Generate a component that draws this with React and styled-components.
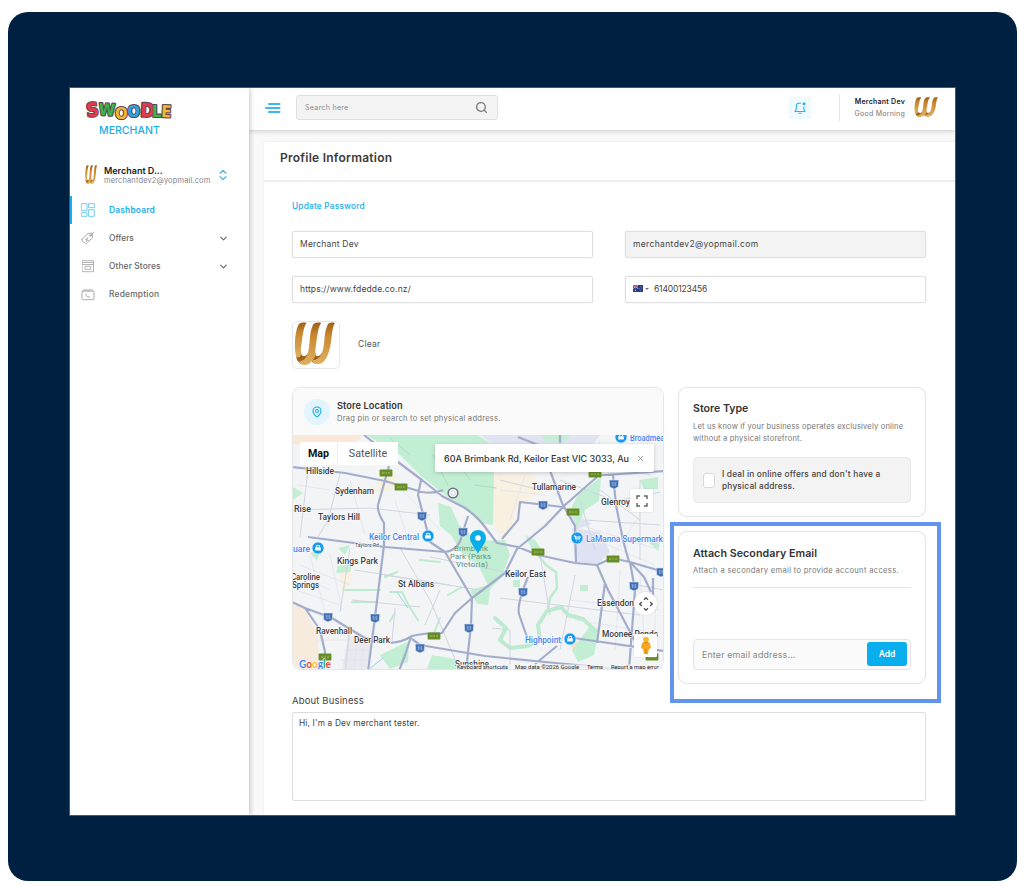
import React from "react";
import styled, { createGlobalStyle, css } from "styled-components";
import { ChevronDown, ChevronsUpDown, Search, MapPin, X } from "lucide-react";

const Global = createGlobalStyle`
  * { box-sizing: border-box; }
  body { margin: 0; background: #fff; font-family: Inter, "Liberation Sans", sans-serif; color: #444; }
  h1, h2, p { margin: 0; }
  svg { display: block; flex: none; }
`;

const fit = css`
  white-space: nowrap;
  letter-spacing: ${(p) => p.$ls || 0}px;
`;

const Page = styled.div`
  height: 886px;
  padding: 12px 7px 5px 8px;
`;
const Frame = styled.div`
  height: 869px;
  padding: 76px 62px 66px;
  background: #002042;
  border-radius: 20px;
`;
const Window = styled.div`
  display: flex;
  height: 727px;
  background: #f9f9f9;
  overflow: hidden;
  box-shadow: 0 0 0 1px #40587a;
`;

/* Sidebar */
const Sidebar = styled.aside`
  width: 179px;
  flex: none;
  background: #fff;
  box-shadow: 1px 0 5px rgba(0, 0, 0, 0.24);
  z-index: 2;
`;
const Brand = styled.div`
  padding: 9px 0 0 15px;
  height: 74px;
`;
const BrandSub = styled.div`
  ${fit}
  margin: 1px 0 0 14px;
  font-size: 10.5px;
  line-height: 13px;
  font-weight: 500;
  color: #18aeea;
`;
const Account = styled.div`
  display: flex;
  align-items: center;
  height: 25px;
  padding-left: 15px;
`;
const AccountText = styled.div`
  width: 107px;
  margin: 0 5px 0 7px;
`;
const AccountName = styled.div`
  ${fit}
  font-size: 9px;
  line-height: 11px;
  font-weight: 600;
  color: #222;
`;
const AccountMail = styled.div`
  ${fit}
  font-size: 7.5px;
  line-height: 9px;
  color: #85858f;
`;
const Nav = styled.nav`
  margin-top: 9px;
`;
const NavItem = styled.div`
  display: flex;
  align-items: center;
  height: 28px;
  padding: 0 20px 0 9px;
  border-left: 2px solid ${(p) => (p.$active ? "#18aeea" : "transparent")};
  color: ${(p) => (p.$active ? "#18aeea" : "#666")};
`;
const NavLabel = styled.span`
  ${fit}
  flex: 1;
  margin-left: 14px;
  font-size: 8.4px;
  font-weight: ${(p) => (p.$active ? 600 : 500)};
`;

/* Top bar */
const Main = styled.main`
  flex: 1;
  min-width: 0;
  display: flex;
  flex-direction: column;
`;
const TopBar = styled.header`
  display: flex;
  align-items: center;
  height: 42px;
  flex: none;
  padding: 0 17px 3px 15px;
  background: #fff;
  box-shadow: 0 1px 5px rgba(0, 0, 0, 0.2);
  z-index: 1;
`;
const SearchBox = styled.div`
  display: flex;
  align-items: center;
  justify-content: space-between;
  width: 202px;
  height: 25px;
  margin-left: 15px;
  padding: 0 9px 0 8px;
  border: 1px solid #e0e0e0;
  border-radius: 3px;
  background: #f3f3f3;
  color: #777;
`;
const SearchHint = styled.span`
  ${fit}
  font-size: 7.2px;
  color: #8b8b96;
`;
const Bell = styled.div`
  display: grid;
  place-items: center;
  width: 22px;
  height: 22px;
  margin-left: auto;
  background: #effaff;
  border-radius: 2px;
`;
const Separator = styled.div`
  width: 1px;
  height: 27px;
  margin: 0 13px 0 28px;
  background: #e4e4e4;
`;
const Greeting = styled.div`
  display: flex;
  flex-direction: column;
  align-items: flex-end;
  width: 52px;
  margin-right: 9px;
`;
const GreetName = styled.div`
  ${fit}
  font-size: 7px;
  line-height: 12px;
  font-weight: 600;
  color: #222;
`;
const GreetLine = styled.div`
  ${fit}
  font-size: 7px;
  line-height: 12px;
  color: #777;
`;

/* Profile panel */
const Panel = styled.section`
  flex: 1;
  margin: 12px 0 0 15px;
  background: #fff;
  box-shadow: 0 0 3px rgba(0, 0, 0, 0.06);
`;
const PanelHead = styled.div`
  height: 40px;
  padding: 7px 0 0 16px;
  border-bottom: 2px solid #efefef;
`;
const PanelTitle = styled.h1`
  ${fit}
  font-size: 12px;
  line-height: 18px;
  font-weight: 600;
  color: #3b3b3b;
`;
const Form = styled.div`
  padding: 16px 29px 0 28px;
`;
const PasswordLink = styled.div`
  ${fit}
  height: 33px;
  font-size: 8.3px;
  line-height: 16px;
  font-weight: 500;
  color: #18aeea;
`;
const Fields = styled.div`
  display: grid;
  grid-template-columns: 1fr 1fr;
  gap: 18px 32px;
`;
const Field = styled.div`
  ${fit}
  display: flex;
  align-items: center;
  height: 27px;
  padding: 0 7px 2px;
  border: 1px solid #e0e0e0;
  border-radius: 2px;
  box-shadow: 0 0 2px rgba(0, 0, 0, 0.08);
  background: ${(p) => (p.$disabled ? "#f3f3f3" : "#fff")};
  font-size: 8.5px;
  color: #444;
`;
const FlagCaret = styled.span`
  margin: 1px 5px 0 2px;
  border: 2px solid transparent;
  border-top: 2.5px solid #777;
  border-bottom: 0;
`;
const LogoRow = styled.div`
  display: flex;
  align-items: center;
  gap: 18px;
  margin: 18px 0;
`;
const LogoBox = styled.div`
  width: 48px;
  height: 48px;
  padding: 0 0 0 1px;
  border: 1px solid #e8e8e8;
  border-radius: 5px;
`;
const ClearText = styled.span`
  ${fit}
  padding-bottom: 2px;
  font-size: 8.6px;
  color: #555;
`;
const Columns = styled.div`
  display: grid;
  grid-template-columns: 372px 248px;
  gap: 14px;
  align-items: start;
`;
const Card = styled.section`
  border: 1px solid #e6e6e6;
  border-radius: 9px;
  background: #fff;
  box-shadow: 0 0 2px rgba(0, 0, 0, 0.07);
`;
const LocationCard = styled(Card)`
  height: 283px;
  overflow: hidden;
`;
const LocationHead = styled.div`
  display: flex;
  align-items: center;
  gap: 7px;
  height: 47px;
  padding-left: 11px;
  background: #fafafa;
`;
const PinDisc = styled.div`
  display: grid;
  place-items: center;
  width: 26px;
  height: 26px;
  border-radius: 50%;
  background: #e2f4fd;
  color: #18aeea;
`;
const CardTitle = styled.h2`
  ${fit}
  font-size: ${(p) => p.$size}px;
  line-height: 14px;
  font-weight: 600;
  color: #333;
`;
const CardText = styled.p`
  ${fit}
  margin-top: ${(p) => p.$top || 0}px;
  font-size: 7.6px;
  line-height: 11.5px;
  color: #777;
`;
const MapArea = styled.div`
  position: relative;
  height: 235px;
`;
const MapTabs = styled.div`
  position: absolute;
  left: 7px;
  top: 7px;
  display: flex;
  height: 23px;
  background: #fff;
  font-family: Roboto, sans-serif;
  font-size: 10.7px;
  line-height: 24px;
`;
const MapTab = styled.div`
  ${fit}
  width: ${(p) => p.$w}px;
  text-align: center;
  color: ${(p) => (p.$on ? "#111" : "#555")};
  font-weight: ${(p) => (p.$on ? 700 : 400)};
  border-right: ${(p) => (p.$on ? "1px solid #eee" : "0")};
`;
const Address = styled.div`
  position: absolute;
  left: 142px;
  top: 9px;
  display: flex;
  align-items: center;
  justify-content: space-between;
  width: 219px;
  height: 28px;
  padding: 0 9px 0 9px;
  border-radius: 2px;
  background: #fff;
  box-shadow: 0 1px 4px rgba(0, 0, 0, 0.18);
  color: #777;
`;
const AddressText = styled.span`
  ${fit}
  font-size: 9px;
  font-weight: 500;
  color: #333;
`;
const MapButton = styled.div`
  position: absolute;
  left: ${(p) => p.$x}px;
  top: ${(p) => p.$y}px;
  display: grid;
  place-items: center;
  width: 23px;
  height: 23px;
  background: #fff;
  border-radius: ${(p) => (p.$round ? "50%" : "1px")};
  box-shadow: 0 0 2px rgba(0, 0, 0, 0.15);
`;
const Side = styled.div`
  display: grid;
  gap: 14px;
`;
const TypeCard = styled(Card)`
  height: 130px;
  padding: 14px 14px 0;
`;
const Option = styled.label`
  display: flex;
  align-items: center;
  gap: 7px;
  height: 46px;
  margin-top: 13px;
  padding-left: 9px;
  border: 1px solid #e9e9e9;
  border-radius: 4px;
  background: #f3f3f3;
`;
const Box = styled.span`
  width: 12px;
  height: 15px;
  border: 1px solid #d8d8d8;
  border-radius: 3px;
  background: #fff;
`;
const OptionText = styled.div`
  ${fit}
  font-size: 8.3px;
  line-height: 12.5px;
  font-weight: 500;
  color: #444;
`;
const EmailCard = styled(Card)`
  position: relative;
  height: 153px;
  padding: 15px 14px 0;
`;
const Highlight = styled.div`
  position: absolute;
  inset: -10px -16px -20px -9px;
  border: 4px solid #6495ed;
  pointer-events: none;
`;
const Rule = styled.div`
  height: 1px;
  margin: 10px 0 51px;
  background: #e4e4e4;
`;
const EmailInput = styled.div`
  display: flex;
  align-items: center;
  justify-content: space-between;
  height: 31px;
  padding: 0 3px 0 8px;
  border: 1px solid #e4e4e4;
  border-radius: 4px;
  background: #fafafa;
`;
const Placeholder = styled.span`
  ${fit}
  font-size: 8.8px;
  color: #888;
`;
const AddButton = styled.button`
  width: 40px;
  height: 24px;
  padding: 0;
  border: 0;
  border-radius: 3px;
  background: #08aeee;
  color: #fff;
  font: 600 8.5px Inter, sans-serif;
`;
const AboutLabel = styled.div`
  ${fit}
  margin: 9px 0 4px;
  font-size: 9.5px;
  line-height: 15px;
  color: #444;
`;
const About = styled.div`
  ${fit}
  height: 89px;
  padding: 5px 6px;
  border: 1px solid #dedede;
  border-radius: 2px;
  font-size: 8.3px;
  line-height: 11px;
  color: #444;
`;

function SwoodleLogo() {
  const letters = [
    ["S", 0, 19, "#e6394b", -6],
    ["W", 11.5, 17, "#3cb54a", 3],
    ["O", 28, 20.5, "#f4b731", 0],
    ["O", 40.5, 18.5, "#2fa5e0", 0],
    ["D", 53, 18.5, "#e6394b", 3],
    ["L", 65, 18.5, "#3cb54a", 0],
    ["E", 74, 19, "#f4b731", 3],
  ];
  return (
    <svg width="90" height="26" viewBox="-1 -1 90 26">
      <text fontFamily="DejaVu Sans Condensed, DejaVu Sans" fontWeight="700" fontSize="16.5" stroke="#5b4652" strokeWidth="2.2" strokeLinejoin="round" paintOrder="stroke">
        {letters.map(([c, x, y, fill, r], i) => (
          <tspan key={i} x={x + 1} y={y} fill={fill} rotate={r} fontSize={c === "S" || c === "D" ? 19 : undefined}>{c}</tspan>
        ))}
      </text>
    </svg>
  );
}

function GoldW({ width, height, id }) {
  return (
    <svg width={width} height={height} viewBox="0 0 42 46" preserveAspectRatio="none">
      <defs>
        <linearGradient id={id} x1="0" y1="0" x2="0" y2="1">
          <stop offset="0" stopColor="#9d5f14" />
          <stop offset="0.3" stopColor="#c98730" />
          <stop offset="1" stopColor="#e0b160" />
        </linearGradient>
      </defs>
      <path d="M7 32C9 37 13 35 15 31L16 38C13 46 3 45 2 34ZM21 32C23 37 27 35 29 31L28 39C25 45 18 43 16 36Z" fill="#9b6220" />
      <g fill={`url(#${id})`}>
        <path d="M4 4C5 .5 9 0 13 1C10 4 9 13 8 20C7 27 6.500 30 8 33C6 36 4 37 2.500 36C0 30 .5 12 4 4Z" />
        <path d="M19 4C20 .5 24 0 28 1C25 4 24 13 23 20C22 27 21.500 30 22.500 33C20 39 16 44 11 44C8 44 6 42 5 40C14 40 15 30 16 20C16.500 13 17 8 19 4Z" />
        <path d="M34 4C35 .5 38 0 42 1C39.500 4 39 13 38 20C36 33 32 43 25 43C21 43 19.500 41 18.500 39C28 39 30 30 31 20C31.500 13 32 8 34 4Z" />
      </g>
    </svg>
  );
}

const line = { fill: "none", stroke: "currentColor", strokeWidth: 0.8, strokeLinejoin: "round", strokeLinecap: "round" };

const DashboardIcon = () => (
  <svg width="14" height="14" viewBox="0 0 14 14" {...line} opacity="0.75">
    <rect x="0.7" y="0.7" width="5.3" height="7" /><rect x="8" y="0.7" width="5.3" height="4" />
    <rect x="0.7" y="9.7" width="5.3" height="3.6" /><rect x="8" y="6.7" width="5.3" height="6.6" />
  </svg>
);
const OffersIcon = () => (
  <svg width="14" height="14" viewBox="0 0 14 14" {...line} opacity="0.65">
    <path d="M1 8.2L7 2.5L11.2 2.2L11.5 6.5L5.7 12.5Q4.8 13.2 4 12.3L1 9.6Q.4 8.9 1 8.2Z" />
    <circle cx="9.4" cy="4.5" r="0.9" /><path d="M10 4L13 1M4.5 8.3L7.2 9.4M6.4 6.7L5.4 10.6" />
  </svg>
);
const StoresIcon = () => (
  <svg width="14" height="14" viewBox="0 0 14 14" {...line} opacity="0.6">
    <rect x="1.5" y="1.7" width="11" height="11" /><path d="M1.500 3.5H12.5M1.500 5.5H12.5" /><rect x="4.3" y="7.3" width="5.4" height="3" />
  </svg>
);
const RedeemIcon = () => (
  <svg width="14" height="14" viewBox="0 0 14 14" {...line} opacity="0.65">
    <rect x="1" y="4" width="12" height="8.7" rx="1" /><path d="M3 4V2.5M7 4C5.5 1 4.3 2 5 4M7 4C8.5 1 9.7 2 9 4M11 4V2.5M5 7V8.500Q5.500 10.5 8.500 10" />
  </svg>
);

const MENU = [
  { label: "Dashboard", Icon: DashboardIcon, active: true, ls: 0.2 },
  { label: "Offers", Icon: OffersIcon, more: true, ls: 0 },
  { label: "Other Stores", Icon: StoresIcon, more: true, ls: 0.1 },
  { label: "Redemption", Icon: RedeemIcon, ls: 0.22 },
];

const MAJOR = [
  "M292 467L345 473L385 481L422 492Q434 494 443 490",
  "M364 435L398 462L422 480L442 496L465 508Q478 517 485 527L497 543L518 547",
  "M389 466L378 505Q377 512 384 523L384 545L375 617L368 671",
  "M421 480L418 495L423 514L430 542L445 552L472 598L471 625L466 671",
  "M308 537L385 547L445 552Q459 550 462 535L468 516",
  "M390 643Q403 642 412 636Q423 633 442 633L455 613L472 598L505 573L517 549L545 526L565 505L597 477",
  "M292 602L305 608L320 630L325 652L324 671M305 608L332 618L363 637L382 643",
  "M411 637L405 655L399 671M412 639L420 645L485 656L545 662L630 670",
  "M518 547L538 555L575 563L597 565L612 558L630 562L644 577L651 592M630 562L664 572",
  "M597 565L608 590L628 628L640 650M605 583L597 643M630 562L635 590L629 670",
  "M528 577Q515 608 520 617L528 640M574 638L664 651M557 646L535 664",
  "M502 539L518 520L520 502L563 507M548 465L562 503L575 526L576 562",
  "M613 475L616 505L623 540L629 562M590 476L664 471M518 437L538 445M560 435V443M653 578V600",
];
const MINOR = [
  "M308 470L300 537M292 510L370 508L430 515M340 474L328 520L318 537M350 548L340 612M400 548L430 600L460 671M355 570L450 585M384 575L480 590M352 600L420 607M430 557L520 575M395 608L392 642M500 598L640 615M575 575L560 650M540 555L550 615M600 490L640 520M540 490L500 480M585 520L660 525M640 480V560M492 628L510 630V670M350 625L345 671M580 500L595 550M440 590L425 625M560 480L605 497M620 500L660 492M637 585L664 590",
];
const STREETS = "M296 575L330 590M300 565L350 585M310 555L325 612M330 555L342 610M296 590L340 605M318 640H365M345 650H370M340 660H368M350 630L346 670M358 635L354 670M365 640L360 670M500 445L550 460M505 440L520 470M530 439L540 468M570 445L650 475M600 440L594 470M500 490L545 495M525 475L510 520M580 525L660 550M585 535L655 565M640 515L610 560M570 600L660 610M575 620L650 632M620 570L615 650M640 575L645 650M655 600V660M297 485L330 490M350 480L365 535M395 500L410 545M398 485L440 530";

const SHIELDS = [[422, 516], [463, 532], [328, 617], [375, 618], [420, 648], [469, 628], [523, 592], [543, 505], [614, 484], [634, 586], [661, 572]];
const ROUTES = [[386, 473], [401, 487], [595, 474], [573, 512], [538, 552], [613, 559], [434, 636], [325, 657], [652, 657]];
const PLACES = [
  ["Hillside", 306, 474, 28], ["Sydenham", 335, 494, 39], ["Rise", 294, 512, 17], ["Taylors Hill", 318, 520, 42],
  ["Kings Park", 337, 564, 41], ["St Albans", 398, 587, 36], ["Caroline", 291, 580, 29], ["Springs", 292, 588, 27],
  ["Ravenhall", 316, 634, 36], ["Deer Park", 354, 643, 36], ["Keilor East", 505, 577, 41], ["Tullamarine", 532, 490, 44],
  ["Glenroy", 601, 505, 29], ["Essendon", 597, 606, 37], ["Moonee Ponds", 602, 637, 56], ["Sunshine", 455, 667, 34],
];
const SPOTS = [["Keilor Central", 369, 540, 50], ["uare", 293, 552, 17], ["LaManna Supermarket", 586, 542, 84], ["Highpoint", 525, 643, 36], ["Broadmeadows", 630, 441, 52]];
const BADGES = [[428, 536], [318, 548], [577, 538], [570, 639], [621, 437]];

function CityMap() {
  return (
    <svg width="370" height="235" viewBox="293 435 370 235" fontFamily="Roboto, sans-serif">
      <rect x="293" y="435" width="370" height="235" fill="#f3f4f6" />
      <path d="M293 435H364L355 443L325 449L293 444Z" fill="#fae9d8" />
      <path d="M293 603L305 610L318 635L319 670H293Z" fill="#f7ebdd" />
      <path d="M492 473H530L545 490L520 505L505 540L490 520ZM377 480L397 475L392 490L376 492ZM338 570L350 565L352 580L342 592Z" fill="#f8f0e1" />
      <path d="M348 635L372 640L366 670H342Z" fill="#e8eaf0" />
      <path d="M572 528L600 532L610 552L598 564L575 562Z" fill="#dfe2f3" />
      <path d="M480 435H600L592 446H495ZM568 510L592 524L575 530Z" fill="#dfe3f2" />
      <path d="M566 640L585 643L574 651Z" fill="#fbe2ca" />
      <g fill="#c2eed4">
        <path d="M366 435H478L500 450L494 470L493 525L480 523L465 508L442 493L420 475L400 455Z" />
        <path d="M438 503L451 507L459 525L478 541L505 540L510 555L501 578L490 589L478 565L461 552L451 535L440 526Z" />
        <path d="M578 495L601 477L599 501L585 510L577 528L571 508Z" />
        <path d="M380 655L409 641L408 662L390 669ZM432 655L460 660L462 669H427ZM338 548L350 545L345 555ZM338 566L352 564L350 572L336 573ZM580 585H588V591H580ZM513 580H520V587H513ZM525 535L535 540L545 554L534 554ZM640 480L658 477V489L644 490ZM590 626L598 635L594 655L578 662L572 650ZM293 487L303 493L293 500ZM310 553L320 551L317 561ZM470 590L491 584L488 605L477 604ZM647 541L660 543L658 551ZM540 435H570L565 441H545Z" />
      </g>
      <g fill="none" stroke="#bdebcf" strokeLinecap="round" strokeLinejoin="round">
        <path d="M495 618L506 628L500 640L510 648L528 646L540 640L538 625L547 611L561 607L568 615L583 619L596 631" strokeWidth="4" />
        <path d="M538 555L546 565L556 572L557 588L550 598L548 608" strokeWidth="2.5" />
        <path d="M390 592L402 592L409 606L418 620M345 590H380M352 602H377M395 613L390 621M420 560L440 562M462 587L448 595M434 633L440 618M385 577L397 572" strokeWidth="2" />
        <path d="M475 485L496 488M433 455L448 485M450 451L470 480M390 438L410 455" stroke="#a8dfbd" strokeWidth="1" />
      </g>
      <path d={STREETS} fill="none" stroke="#dfe3ec" strokeWidth="0.8" />
      <path d={MINOR.join("")} fill="none" stroke="#d0d5e1" strokeWidth="1" />
      <path d={MAJOR.join("")} fill="none" stroke="#a3adcb" strokeWidth="2.2" strokeLinejoin="round" />
      <path d="M383 658L368 670M470 551L480 548M397 592L408 608" stroke="#95d8dd" strokeWidth="1" fill="none" />
      {SHIELDS.map(([x, y], i) => (
        <g key={i} transform={`translate(${x} ${y})`}>
          <path d="M-4.8-4H4.8L4.2 3L0 5L-4.2 3Z" fill="#416fb4" stroke="#dfe9f5" strokeWidth="0.6" />
          <path d="M-2.3-1H-.4M.5-1H2.2M-2 1H-.4M.5 1H2.2" stroke="#dce8f7" strokeWidth="0.8" />
        </g>
      ))}
      {ROUTES.map(([x, y], i) => (
        <g key={i} transform={`translate(${x} ${y})`}>
          <rect x="-6.4" y="-3.5" width="12.8" height="7" rx="0.7" fill="#668e28" />
          <path d="M-4 0H-1.5M-.6 0H1M2 0H4" stroke="#b4bf57" strokeWidth="1.2" />
        </g>
      ))}
      <circle cx="453" cy="493" r="4.8" fill="#fff" stroke="#6d7480" strokeWidth="1.6" /><circle cx="453" cy="493" r="2.3" fill="none" stroke="#c6cbd2" />
      <g fill="#5d9580" fontSize="7.8" lengthAdjust="spacingAndGlyphs"><text x="454" y="551" textLength="34">Brimbank</text><text x="450" y="559" textLength="41">Park (Parks</text><text x="456" y="567" textLength="32">Victoria)</text></g>
      <g fill="#3a3d43" fontSize="8.5" fontWeight="500" stroke="#fff" strokeWidth="1.1" paintOrder="stroke">
        {PLACES.map(([t, x, y, w]) => <text key={t} x={x} y={y} textLength={w} lengthAdjust="spacingAndGlyphs">{t}</text>)}
        <text x="355" y="547" fontSize="5.5" textLength="24" lengthAdjust="spacingAndGlyphs" fontWeight="400">Taylors Rd</text>
      </g>
      <g fill="#4285f4" fontSize="8.3" fontWeight="500" stroke="#fff" strokeWidth="0.9" paintOrder="stroke">
        {SPOTS.map(([t, x, y, w]) => <text key={t} x={x} y={y} textLength={w} lengthAdjust="spacingAndGlyphs">{t}</text>)}
      </g>
      {BADGES.map(([x, y], i) => (
        <g key={i} transform={`translate(${x} ${y})`}>
          <circle r="6" fill="#169bef" stroke="#d8f0ff" strokeWidth="0.7" />
          {i === 2 ? <path d="M-3-2H-2L-1 1H2L3-1H-1M-1 3H-.5M2 3H2.5" fill="none" stroke="#fff" strokeWidth="1.2" /> : <><path d="M-2.8-.8H2.8V2.6H-2.8Z" fill="#fff" /><path d="M-1.4-.8V-2.5H1.4V-.8" fill="none" stroke="#fff" /></>}
        </g>
      ))}
      <path d="M478 554C476 548 470 544 470 538A8 8 0 0 1 486 538C486 544 480 548 478 554Z" fill="#08aeea" /><circle cx="478" cy="538" r="2.8" fill="#fff" />
      <text x="299" y="668" fontFamily="Lato, sans-serif" fontWeight="700" fontSize="11.5" textLength="32" lengthAdjust="spacingAndGlyphs" stroke="#fff" strokeWidth="1.2" paintOrder="stroke">
        <tspan fill="#4285f4">G</tspan><tspan fill="#ea4335">o</tspan><tspan fill="#fbbc05">o</tspan><tspan fill="#4285f4">g</tspan><tspan fill="#34a853">l</tspan><tspan fill="#ea4335">e</tspan>
      </text>
      <rect x="456" y="664.5" width="207" height="6" fill="#f5f5f5" opacity="0.8" />
      <g fontSize="5.8" fill="#222">
        <text x="457" y="669" textLength="51" lengthAdjust="spacingAndGlyphs">Keyboard shortcuts</text><text x="515" y="669" textLength="64" lengthAdjust="spacingAndGlyphs">Map data ©2026 Google</text>
        <text x="587" y="669" textLength="16" lengthAdjust="spacingAndGlyphs">Terms</text><text x="611" y="669" textLength="48" lengthAdjust="spacingAndGlyphs">Report a map error</text>
      </g>
    </svg>
  );
}

const Flag = () => (
  <svg width="10" height="7" viewBox="0 0 10 7">
    <rect width="10" height="7" fill="#2b3b84" /><path d="M0 0L5 3.5M5 0L0 3.5" stroke="#fff" strokeWidth="0.7" />
    <path d="M2.5 0V3.5M0 1.75H5" stroke="#e15265" strokeWidth="0.8" /><g fill="#dfe4ff"><circle cx="2.5" cy="5.3" r=".6" /><circle cx="7.5" cy="1.4" r=".4" /><circle cx="7.5" cy="5.6" r=".4" /><circle cx="8.8" cy="3" r=".4" /><circle cx="6.3" cy="3.3" r=".4" /></g>
  </svg>
);

export default function App() {
  return (
    <Page>
      <Global />
      <Frame>
        <Window>
          <Sidebar>
            <Brand>
              <SwoodleLogo />
              <BrandSub $ls={0.05}>MERCHANT</BrandSub>
            </Brand>
            <Account>
              <GoldW width={12} height={20} id="gold-account" />
              <AccountText>
                <AccountName>Merchant D...</AccountName>
                <AccountMail $ls={0.13}>merchantdev2@yopmail.com</AccountMail>
              </AccountText>
              <ChevronsUpDown size={14} color="#38b6ea" strokeWidth={2} />
            </Account>
            <Nav>
              {MENU.map(({ label, Icon, active, more, ls }) => (
                <NavItem key={label} $active={active}>
                  <Icon />
                  <NavLabel $active={active} $ls={ls}>{label}</NavLabel>
                  {more && <ChevronDown size={11} strokeWidth={2.4} />}
                </NavItem>
              ))}
            </Nav>
          </Sidebar>
          <Main>
            <TopBar>
              <svg width="17" height="12" viewBox="0 0 17 12" stroke="#3bb9ec" strokeWidth="2" strokeLinecap="round"><path d="M5 2H15.500M2 6H15.500M5 10H15.500" /></svg>
              <SearchBox>
                <SearchHint $ls={0.22}>Search here</SearchHint>
                <Search size={13} strokeWidth={2.4} />
              </SearchBox>
              <Bell>
                <svg width="14" height="14" viewBox="0 0 14 14" fill="none" stroke="#2bb3ea" strokeWidth="1.1"><path d="M8 2.3H6Q3.500 2.3 3.3 5V8L2 10.5H12L10.8 8V5.500M5.500 12.3H8.500" strokeLinejoin="round" /><circle cx="11" cy="2.8" r="1.5" fill="#2bb3ea" stroke="none" /></svg>
              </Bell>
              <Separator />
              <Greeting>
                <GreetName $ls={0.25}>Merchant Dev</GreetName>
                <GreetLine $ls={0.25}>Good Morning</GreetLine>
              </Greeting>
              <GoldW width={24} height={21} id="gold-top" />
            </TopBar>
            <Panel>
              <PanelHead><PanelTitle $ls={0.25}>Profile Information</PanelTitle></PanelHead>
              <Form>
                <PasswordLink $ls={0.2}>Update Password</PasswordLink>
                <Fields>
                  <Field $ls={0.2}>Merchant Dev</Field>
                  <Field $disabled $ls={0.35}>merchantdev2@yopmail.com</Field>
                  <Field $ls={0.14}>https://www.fdedde.co.nz/</Field>
                  <Field $ls={-0.15}><Flag /><FlagCaret />61400123456</Field>
                </Fields>
                <LogoRow>
                  <LogoBox><GoldW width={41} height={45} id="gold-upload" /></LogoBox>
                  <ClearText $ls={0.15}>Clear</ClearText>
                </LogoRow>
                <Columns>
                  <LocationCard>
                    <LocationHead>
                      <PinDisc><MapPin size={12} strokeWidth={2.2} /></PinDisc>
                      <div>
                        <CardTitle $size={9.2} $ls={0.1}>Store Location</CardTitle>
                        <CardText $ls={0.24}>Drag pin or search to set physical address.</CardText>
                      </div>
                    </LocationHead>
                    <MapArea>
                      <CityMap />
                      <MapTabs><MapTab $on $w={38}>Map</MapTab><MapTab $w={60}>Satellite</MapTab></MapTabs>
                      <Address><AddressText>60A Brimbank Rd, Keilor East VIC 3033, Au</AddressText><X size={9} strokeWidth={2} /></Address>
                      <MapButton $x={337} $y={54}>
                        <svg width="12" height="12" viewBox="0 0 12 12" fill="none" stroke="#666" strokeWidth="1.5"><path d="M1 4V1H4M8 1H11V4M11 8V11H8M4 11H1V8" /></svg>
                      </MapButton>
                      <MapButton $round $x={341} $y={157}>
                        <svg width="14" height="14" viewBox="0 0 14 14" fill="none" stroke="#555" strokeWidth="1.4"><path d="M5 2.8L7 .8L9 2.8M5 11.2L7 13.2L9 11.2M2.8 5L.8 7L2.8 9M11.2 5L13.2 7L11.2 9" /></svg>
                      </MapButton>
                      <MapButton $x={341} $y={199}>
                        <svg width="12" height="19" viewBox="0 0 12 19"><path d="M2 7Q6 4 10 7L11 12L9 13L8 18H4L3 13L1 12Z" fill="#f5a623" /><circle cx="6" cy="3.6" r="2.9" fill="#f8b72d" /><path d="M4 6Q6 8 8 6M6 13V18" stroke="#c87d10" fill="none" strokeWidth=".8" /></svg>
                      </MapButton>
                    </MapArea>
                  </LocationCard>
                  <Side>
                    <TypeCard>
                      <CardTitle $size={10.6}>Store Type</CardTitle>
                      <CardText $top={5} $ls={0.16}>Let us know if your business operates exclusively online<br />without a physical storefront.</CardText>
                      <Option><Box /><OptionText $ls={0.2}>I deal in online offers and don't have a<br />physical address.</OptionText></Option>
                    </TypeCard>
                    <EmailCard>
                      <CardTitle $size={10.7} $ls={0.05}>Attach Secondary Email</CardTitle>
                      <CardText $top={4} $ls={0.32}>Attach a secondary email to provide account access.</CardText>
                      <Rule />
                      <EmailInput><Placeholder $ls={0.18}>Enter email address...</Placeholder><AddButton>Add</AddButton></EmailInput>
                      <Highlight />
                    </EmailCard>
                  </Side>
                </Columns>
                <AboutLabel $ls={0.15}>About Business</AboutLabel>
                <About $ls={0.17}>Hi, I'm a Dev merchant tester.</About>
              </Form>
            </Panel>
          </Main>
        </Window>
      </Frame>
    </Page>
  );
}
